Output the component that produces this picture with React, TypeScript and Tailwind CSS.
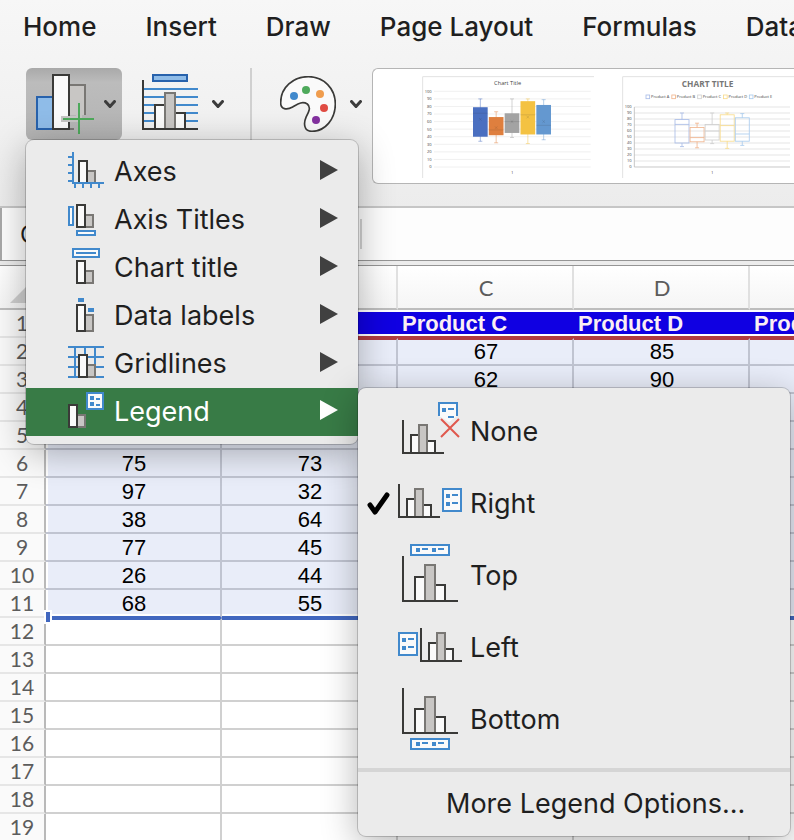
import { useState } from "react";
import type { ReactNode } from "react";

const TABS = ["Home", "Insert", "Draw", "Page Layout", "Formulas", "Data"];

const COLUMNS = ["A", "B", "C", "D", "E"];

const PRODUCTS = ["Product A", "Product B", "Product C", "Product D", "Product E"];

const DATA = [
  [84, 61, 67, 85, 74],
  [71, 58, 62, 90, 66],
  [55, 49, 71, 44, 83],
  [34, 33, 45, 31, 55],
  [75, 73, 90, 62, 89],
  [97, 32, 39, 87, 36],
  [38, 64, 58, 70, 44],
  [77, 45, 66, 43, 56],
  [26, 44, 71, 69, 60],
  [68, 55, 60, 78, 82],
];

const EMPTY_ROWS = [12, 13, 14, 15, 16, 17, 18, 19];

type BarProps = { x: number; y: number; w: number; bottom: number; gray?: boolean };

function Bar({ x, y, w, bottom, gray }: BarProps) {
  return (
    <rect
      x={x + 1}
      y={y + 1}
      width={w - 2}
      height={bottom - y - 2}
      fill={gray ? "#c8c6c4" : "#fafafa"}
      stroke={gray ? "#797774" : "#3a3a38"}
      strokeWidth="2"
    />
  );
}

function BlueBox({ x, y, w, h }: { x: number; y: number; w: number; h: number }) {
  return (
    <rect x={x + 1} y={y + 1} width={w - 2} height={h - 2} fill="#fafafa" stroke="#4189cc" strokeWidth="2" />
  );
}

function MenuIcon({ children }: { children: ReactNode }) {
  return (
    <svg className="h-10 w-9 shrink-0" viewBox="0 0 36 40" shapeRendering="crispEdges" aria-hidden="true">
      {children}
    </svg>
  );
}

const ELEMENT_ITEMS: { label: string; icon: ReactNode }[] = [
  {
    label: "Axes",
    icon: (
      <MenuIcon>
        <Bar x={18} y={18} w={10} bottom={32} gray />
        <Bar x={10} y={8} w={10} bottom={32} />
        <path
          d="M5 0V32M4 31H36M0 5H4M0 13H4M0 21H4M0 29H4M7 32V36M15 32V36M23 32V36M31 32V36"
          fill="none"
          stroke="#4189cc"
          strokeWidth="2"
        />
      </MenuIcon>
    ),
  },
  {
    label: "Axis Titles",
    icon: (
      <MenuIcon>
        <BlueBox x={0} y={6} w={6} h={20} />
        <BlueBox x={8} y={30} w={20} h={6} />
        <Bar x={16} y={14} w={10} bottom={28} gray />
        <Bar x={8} y={4} w={10} bottom={28} />
      </MenuIcon>
    ),
  },
  {
    label: "Chart title",
    icon: (
      <MenuIcon>
        <BlueBox x={4} y={0} w={28} h={10} />
        <path d="M8 5H28" stroke="#4189cc" strokeWidth="2" />
        <Bar x={16} y={22} w={10} bottom={36} gray />
        <Bar x={8} y={12} w={10} bottom={36} />
      </MenuIcon>
    ),
  },
  {
    label: "Data labels",
    icon: (
      <MenuIcon>
        <path d="M10 2H16V6H10ZM20 12H26V16H20Z" fill="#4189cc" />
        <Bar x={16} y={18} w={10} bottom={36} gray />
        <Bar x={8} y={8} w={10} bottom={36} />
      </MenuIcon>
    ),
  },
  {
    label: "Gridlines",
    icon: (
      <MenuIcon>
        <path
          d="M0 3H36M0 13H36M0 23H36M0 33H36M7 2V34M17 2V34M27 2V34"
          stroke="#4189cc"
          strokeWidth="2"
        />
        <Bar x={18} y={20} w={10} bottom={34} gray />
        <Bar x={10} y={10} w={10} bottom={34} />
      </MenuIcon>
    ),
  },
  {
    label: "Legend",
    icon: (
      <MenuIcon>
        <Bar x={8} y={22} w={10} bottom={36} gray />
        <Bar x={0} y={12} w={10} bottom={36} />
        <BlueBox x={18} y={0} w={18} h={18} />
        <path d="M22 4H26V8H22ZM28 6H32V8H28ZM22 10H26V14H22ZM28 12H32V14H28Z" fill="#4189cc" />
      </MenuIcon>
    ),
  },
];

function LegendIcon({ children }: { children: ReactNode }) {
  return (
    <svg className="h-18 w-16 shrink-0" viewBox="0 0 64 72" aria-hidden="true">
      {children}
    </svg>
  );
}

function SmallChart({ x, y }: { x: number; y: number }) {
  return (
    <g shapeRendering="crispEdges">
      <Bar x={x + 8} y={y + 14} w={10} bottom={y + 34} />
      <Bar x={x + 24} y={y + 20} w={10} bottom={y + 34} />
      <Bar x={x + 16} y={y + 4} w={10} bottom={y + 34} gray />
      <path d={`M${x + 1} ${y}V${y + 33}H${x + 42}`} fill="none" stroke="#3a3a38" strokeWidth="2" />
    </g>
  );
}

function LargeChart({ x, y }: { x: number; y: number }) {
  return (
    <g shapeRendering="crispEdges">
      <Bar x={x + 12} y={y + 20} w={12} bottom={y + 46} />
      <Bar x={x + 32} y={y + 28} w={12} bottom={y + 46} />
      <Bar x={x + 22} y={y + 8} w={12} bottom={y + 46} gray />
      <path d={`M${x + 1} ${y}V${y + 45}H${x + 56}`} fill="none" stroke="#3a3a38" strokeWidth="2" />
    </g>
  );
}

function TallLegend({ x }: { x: number }) {
  return (
    <g shapeRendering="crispEdges">
      <BlueBox x={x} y={20} w={20} h={24} />
      <path
        transform={`translate(${x} 20)`}
        d="M4 6H8V10H4ZM10 6H16V8H10ZM4 14H8V18H4ZM10 14H16V16H10Z"
        fill="#4189cc"
      />
    </g>
  );
}

function WideLegend({ y }: { y: number }) {
  return (
    <g shapeRendering="crispEdges">
      <BlueBox x={12} y={y} w={40} h={12} />
      <path
        transform={`translate(12 ${y})`}
        d="M6 4H10V8H6ZM12 4H18V6H12ZM22 4H26V8H22ZM28 4H34V6H28Z"
        fill="#4189cc"
      />
    </g>
  );
}

const LEGEND_ITEMS: { label: string; icon: ReactNode }[] = [
  {
    label: "None",
    icon: (
      <LegendIcon>
        <SmallChart x={4} y={24} />
        <path d="M41 20V7H59V20L51 26Z" fill="#fafafa" />
        <path d="M41 20V7H59V20" fill="none" stroke="#4189cc" strokeWidth="2" />
        <path d="M44 12H48V16H44ZM50 12H56V14H50ZM50 20H56V22H50Z" fill="#4189cc" />
        <path d="M43 23L61 41M61 23L43 41" stroke="#e0584d" strokeWidth="2" />
      </LegendIcon>
    ),
  },
  {
    label: "Right",
    icon: (
      <LegendIcon>
        <SmallChart x={0} y={16} />
        <TallLegend x={44} />
      </LegendIcon>
    ),
  },
  {
    label: "Top",
    icon: (
      <LegendIcon>
        <WideLegend y={4} />
        <LargeChart x={4} y={16} />
      </LegendIcon>
    ),
  },
  {
    label: "Left",
    icon: (
      <LegendIcon>
        <TallLegend x={0} />
        <SmallChart x={22} y={16} />
      </LegendIcon>
    ),
  },
  {
    label: "Bottom",
    icon: (
      <LegendIcon>
        <LargeChart x={4} y={4} />
        <WideLegend y={54} />
      </LegendIcon>
    ),
  },
];

function Chevron() {
  return (
    <svg className="h-2 w-3 shrink-0" viewBox="0 0 12 8" aria-hidden="true">
      <path d="M1.5 1.5L6 6.5L10.5 1.5" fill="none" stroke="#3c3c3c" strokeWidth="3" strokeLinecap="round" />
    </svg>
  );
}

function AddElementIcon() {
  return (
    <svg className="h-16 w-15 shrink-0" viewBox="0 0 60 64" shapeRendering="crispEdges" aria-hidden="true">
      <rect x="1" y="25" width="18" height="32" fill="#8fbce8" stroke="#2862ac" strokeWidth="2" />
      <path d="M34 13H49V43H34Z" fill="#c8c6c4" />
      <path d="M34 13H49V43M34 57H38" fill="none" stroke="#797774" strokeWidth="2" />
      <rect x="17" y="3" width="16" height="54" fill="#fafafa" stroke="#3a3a38" strokeWidth="2" />
      <path d="M43 29V46M25 47H42" stroke="#c6c5c4" strokeWidth="6" />
      <path d="M43 31V62M27 47H58" stroke="#4ea95b" strokeWidth="2" />
    </svg>
  );
}

function QuickLayoutIcon() {
  return (
    <svg className="h-16 w-14 shrink-0" viewBox="0 0 56 64" shapeRendering="crispEdges" aria-hidden="true">
      <rect x="11" y="3" width="34" height="6" fill="#8fbce8" stroke="#2862ac" strokeWidth="2" />
      <path d="M2 17H56M2 25H56M2 33H56M2 41H56M2 49H56" stroke="#4189cc" strokeWidth="2" />
      <Bar x={12} y={32} w={12} bottom={58} />
      <Bar x={32} y={40} w={12} bottom={58} />
      <Bar x={22} y={20} w={12} bottom={58} gray />
      <path d="M1 8V57H56" fill="none" stroke="#3a3a38" strokeWidth="2" />
    </svg>
  );
}

function PaletteIcon() {
  return (
    <svg className="h-14 w-14 shrink-0" viewBox="840 228 168 168" aria-hidden="true">
      <path
        d="M842 308C842 262 880 230 925 230C972 230 1006 266 1006 312C1006 358 975 394 936 394C910 394 911 368 918 352C926 336 934 322 922 312C906 302 892 313 878 321C860 331 842 328 842 308Z"
        fill="#fafafa"
        stroke="#3a3a38"
        strokeWidth="5"
      />
      <circle cx="882" cy="288" r="12" fill="#4189cc" />
      <circle cx="918" cy="270" r="12" fill="#4ea95b" />
      <circle cx="960" cy="282" r="12" fill="#f09d4e" />
      <circle cx="972" cy="324" r="12" fill="#e04c43" />
      <circle cx="948" cy="360" r="12" fill="#8431a0" />
    </svg>
  );
}

const BOXES = [
  { color: "#4a6fc0", light: "#a9bde8", max: 90, q3: 79, q1: 40, min: 34, median: 71, mean: 63 },
  { color: "#df7f3e", light: "#f0b48d", max: 73, q3: 66, q1: 42, min: 32, median: 49, mean: 52 },
  { color: "#a3a3a3", light: "#cfcfcf", max: 90, q3: 71, q1: 45, min: 39, median: 60, mean: 60 },
  { color: "#f4c242", light: "#f8dc8c", max: 90, q3: 87, q1: 43, min: 31, median: 69, mean: 66 },
  { color: "#6498d0", light: "#a9cbed", max: 89, q3: 82, q1: 43, min: 36, median: 55, mean: 60 },
];

const TICKS = [0, 10, 20, 30, 40, 50, 60, 70, 80, 90, 100];

function FilledBoxChart() {
  const y = (v: number) => 273 - v * 2.27;
  return (
    <svg className="w-43 shrink-0" viewBox="0 0 516 306" role="img" aria-label="Chart style 1">
      <path d="M2 306V2H516" fill="none" stroke="#e2e2e2" strokeWidth="3" />
      <text x="257" y="28" textAnchor="middle" fontSize="17" fill="#444">Chart Title</text>
      {TICKS.map((t) => (
        <g key={t}>
          <path d={`M36 ${y(t)}H506`} stroke="#e8e8e8" strokeWidth="2" />
          <text x="29" y={y(t) + 4} textAnchor="end" fontSize="12" fill="#444">{t}</text>
        </g>
      ))}
      {BOXES.map((b, i) => {
        const cx = 175 + i * 47.5;
        return (
          <g key={b.color}>
            <path
              d={`M${cx} ${y(b.max)}V${y(b.min)}M${cx - 6} ${y(b.max)}H${cx + 6}M${cx - 6} ${y(b.min)}H${cx + 6}`}
              stroke={b.color}
              strokeOpacity="0.7"
              strokeWidth="2"
            />
            <rect x={cx - 22} y={y(b.q3)} width="44" height={y(b.q1) - y(b.q3)} fill={b.color} />
            <path
              d={`M${cx - 22} ${y(b.median)}H${cx + 22}M${cx - 4} ${y(b.mean) - 4}l8 8m0 -8l-8 8`}
              stroke="#333"
              strokeOpacity="0.25"
              strokeWidth="1.5"
            />
          </g>
        );
      })}
      <text x="271" y="294" textAnchor="middle" fontSize="13" fill="#444">1</text>
    </svg>
  );
}

function OutlineBoxChart() {
  const y = (v: number) => 273 - v * 1.8;
  return (
    <svg className="w-43 shrink-0" viewBox="0 0 516 306" role="img" aria-label="Chart style 2">
      <path d="M2 306V2H516" fill="none" stroke="#e2e2e2" strokeWidth="3" />
      <text x="257" y="32" textAnchor="middle" fontSize="25" fontWeight="bold" fill="#777">CHART TITLE</text>
      {BOXES.map((b, i) => (
        <g key={b.color}>
          <rect x={72 + i * 77.5} y="57" width="11" height="11" fill="#fff" stroke={b.light} strokeWidth="2.5" />
          <text x={87 + i * 77.5} y="67" fontSize="12" fill="#444">{PRODUCTS[i]}</text>
        </g>
      ))}
      {TICKS.map((t) => (
        <g key={t}>
          <path d={`M37 ${y(t)}H504`} stroke={t === 0 ? "#bdbdbd" : "#e0e0e0"} strokeWidth="2.5" />
          <text x="29" y={y(t) + 4} textAnchor="end" fontSize="12" fill="#444">{t}</text>
        </g>
      ))}
      <path d="M37 93V273" stroke="#bdbdbd" strokeWidth="2.5" />
      {BOXES.map((b, i) => {
        const cx = 180 + i * 45.2;
        return (
          <g key={b.color} fill="none" stroke={b.light} strokeWidth="2.5">
            <rect x={cx - 21} y={y(b.q3)} width="42" height={y(b.q1) - y(b.q3)} />
            <path
              d={`M${cx - 21} ${y(b.median)}H${cx + 21}M${cx} ${y(b.max)}V${y(b.q3)}M${cx} ${y(b.q1)}V${y(b.min)}M${cx - 6} ${y(b.max)}H${cx + 6}M${cx - 6} ${y(b.min)}H${cx + 6}`}
            />
          </g>
        );
      })}
      <text x="271" y="294" textAnchor="middle" fontSize="13" fill="#444">1</text>
    </svg>
  );
}

function LegendMenu() {
  const [position, setPosition] = useState("Right");

  return (
    <ul
      role="menu"
      className="absolute top-0 left-full w-108 rounded-lg bg-[#ebebeb] py-2 shadow-[0_0_0_1px_rgba(0,0,0,0.18),0_8px_36px_rgba(0,0,0,0.3)]"
    >
      {LEGEND_ITEMS.map((item) => (
        <li key={item.label}>
          <button
            role="menuitemradio"
            aria-checked={position === item.label}
            onClick={() => setPosition(item.label)}
            className="flex h-18 w-full items-center pl-2"
          >
            <span className="w-8 shrink-0">
              {position === item.label && (
                <svg className="h-6 w-6" viewBox="0 0 24 24" aria-hidden="true">
                  <path d="M4 13L9 20L21 3" fill="none" stroke="#000" strokeWidth="5" strokeLinecap="round" strokeLinejoin="round" />
                </svg>
              )}
            </span>
            {item.icon}
            <span className="pl-2">{item.label}</span>
          </button>
        </li>
      ))}
      <li role="separator" className="mt-3 mb-2 h-1 bg-[#d5d5d5]" />
      <li>
        <button role="menuitem" className="h-12 w-full pl-22 text-left">
          More Legend Options...
        </button>
      </li>
    </ul>
  );
}

function ChartElementMenu() {
  return (
    <ul
      role="menu"
      className="absolute top-full left-0 z-10 w-83 rounded-lg bg-[#ebebeb] py-2 text-[27px] leading-8 text-[#1f1f1f] shadow-[0_0_0_1px_rgba(0,0,0,0.18),0_8px_36px_rgba(0,0,0,0.3)]"
    >
      {ELEMENT_ITEMS.map((item) => {
        const active = item.label === "Legend";
        return (
          <li key={item.label} className="relative">
            <button
              role="menuitem"
              aria-haspopup="menu"
              aria-expanded={active}
              className={`flex h-12 w-full items-center pr-5 pl-[42px] ${active ? "bg-[#387b46] text-white" : ""}`}
            >
              {item.icon}
              <span className="flex-1 pl-2.5 text-left">{item.label}</span>
              <svg
                className={`mb-1 h-5 w-[18px] ${active ? "fill-white" : "fill-[#404040]"}`}
                viewBox="0 0 18 20"
                aria-hidden="true"
              >
                <path d="M0 0L18 10L0 20Z" />
              </svg>
            </button>
            {active && <LegendMenu />}
          </li>
        );
      })}
    </ul>
  );
}

function Ribbon() {
  return (
    <div className="flex h-[152px] shrink-0 items-start pt-3.5 pl-[26px]">
      <div className="relative w-24 shrink-0">
        <button
          aria-label="Add Chart Element"
          className="flex h-18 w-full items-center justify-between rounded-md bg-linear-to-b from-[#a9a9a9] via-[#bcbcbc] via-20% to-[#b3b3b3] pr-1.5 pl-2.5"
        >
          <AddElementIcon />
          <Chevron />
        </button>
        <span className="block h-0 text-center text-[22px] leading-8">Add Chart</span>
        <ChartElementMenu />
      </div>
      <button aria-label="Quick Layout" className="ml-5 flex h-18 shrink-0 items-center gap-3.5">
        <QuickLayoutIcon />
        <Chevron />
      </button>
      <div className="ml-[26px] h-34 w-0.5 shrink-0 bg-[#d0d0d0]" />
      <button aria-label="Change Colors" className="ml-7 flex h-18 shrink-0 items-center gap-3.5">
        <PaletteIcon />
        <Chevron />
      </button>
      <div className="ml-2.5 flex h-29 min-w-0 flex-1 items-start gap-7 overflow-hidden rounded-l-md border border-r-0 border-[#b5b5b5] bg-white pt-[7px] pl-[49px] font-['Open_Sans',sans-serif]">
        <FilledBoxChart />
        <OutlineBoxChart />
      </div>
    </div>
  );
}

function FormulaBar() {
  return (
    <div className="flex h-15 shrink-0 flex-col border-t-2 border-[#c6c6c6] bg-[#fdfdfd]">
      <div className="flex flex-1 items-center">
        <input
          aria-label="Name box"
          defaultValue="Chart 1"
          className="h-full w-60 border-l-2 border-[#a8a8a8] bg-transparent pl-4.5 text-2xl outline-none"
        />
        <div className="ml-30 h-7.5 w-0.5 bg-[#d0d0d0]" />
        <input aria-label="Formula" className="h-full min-w-0 flex-1 bg-transparent px-3 text-2xl outline-none" />
      </div>
      <div className="h-1.5 border-y border-[#959595] bg-[#ececec]" />
    </div>
  );
}

function Sheet() {
  return (
    <div className="min-h-0 flex-1 overflow-hidden bg-white">
      <table className="w-[926px] table-fixed border-separate border-spacing-0 font-['Liberation_Sans',Arial,sans-serif] text-[22px] leading-6 text-black">
        <thead className="font-['Lato',sans-serif] text-[#5c5c5c]">
          <tr className="h-11">
            <th className="w-[46px] border-r-2 border-b-2 border-[#bdbdbd] bg-linear-to-b from-white to-[#f5f5f5] p-0">
              <svg className="ml-2.5 h-8 w-8" viewBox="0 0 32 32" aria-hidden="true">
                <path d="M0 32L32 0V32Z" fill="#cfcfcf" />
              </svg>
            </th>
            {COLUMNS.map((c) => (
              <th
                key={c}
                scope="col"
                className="w-44 border-r-2 border-b-2 border-r-[#e0e0e0] border-b-[#bdbdbd] bg-linear-to-b from-white to-[#f5f5f5] p-0 pt-0.5 pl-0.5 font-normal"
              >
                {c}
              </th>
            ))}
          </tr>
        </thead>
        <tbody>
          <tr className="h-7">
            <RowHeader n={1} />
            {PRODUCTS.map((p) => (
              <th key={p} className="border-b-2 border-[#b03c41] bg-white px-0 py-0.5 text-left">
                <span className="block h-[22px] bg-[#1000e2] pl-1 leading-6 text-[#fbeef3]">{p}</span>
              </th>
            ))}
          </tr>
          {DATA.map((row, r) => {
            const last = r === DATA.length - 1;
            return (
              <tr key={r} className="h-7">
                <RowHeader n={r + 2} />
                {row.map((v, c) => (
                  <td
                    key={c}
                    className={`relative border-r-2 border-b-2 border-r-[#c0c4d1] bg-[#e9edf9] p-0 pl-0.5 text-center ${
                      r === 0 ? "border-t-2 border-t-[#b03c41]" : "pt-0.5"
                    } ${last ? "border-b-[#4167bf] shadow-[inset_0_-2px_0_white]" : "border-b-[#c0c4d1]"}`}
                  >
                    {v}
                    {c === 0 && <span className="absolute inset-y-0 left-0 w-0.5 bg-white" />}
                    {last && c === 0 && (
                      <span className="absolute -bottom-1.5 left-0 z-1 h-2.5 w-1 bg-[#4167bf] outline-2 outline-white" />
                    )}
                  </td>
                ))}
              </tr>
            );
          })}
          {EMPTY_ROWS.map((n) => (
            <tr key={n} className="h-7">
              <RowHeader n={n} />
              {COLUMNS.map((c) => (
                <td
                  key={c}
                  className={`border-r-2 border-b-2 border-[#d0d0d0] p-0 ${n === 12 ? "border-t-2 border-t-[#4167bf]" : ""}`}
                />
              ))}
            </tr>
          ))}
        </tbody>
      </table>
    </div>
  );
}

function RowHeader({ n }: { n: number }) {
  return (
    <th
      scope="row"
      className="border-r-2 border-b-2 border-r-[#b9b9b9] border-b-[#e6e6e6] bg-[#fafafa] p-0 text-center font-['Lato',sans-serif] text-[21px] leading-6 font-normal text-[#5c5c5c]"
    >
      {n}
    </th>
  );
}

export default function App() {
  return (
    <div className="flex h-screen flex-col overflow-hidden bg-linear-to-b from-[#f7f7f7] to-[#ececec] to-25% font-['Inter',sans-serif] text-[#1f1f1f]">
      <nav className="flex h-[54px] shrink-0 items-center gap-[49px] pl-[23px] text-[26px] leading-8 font-medium whitespace-nowrap">
        {TABS.map((tab) => (
          <a key={tab} href="#">
            {tab}
          </a>
        ))}
      </nav>
      <Ribbon />
      <FormulaBar />
      <Sheet />
    </div>
  );
}
